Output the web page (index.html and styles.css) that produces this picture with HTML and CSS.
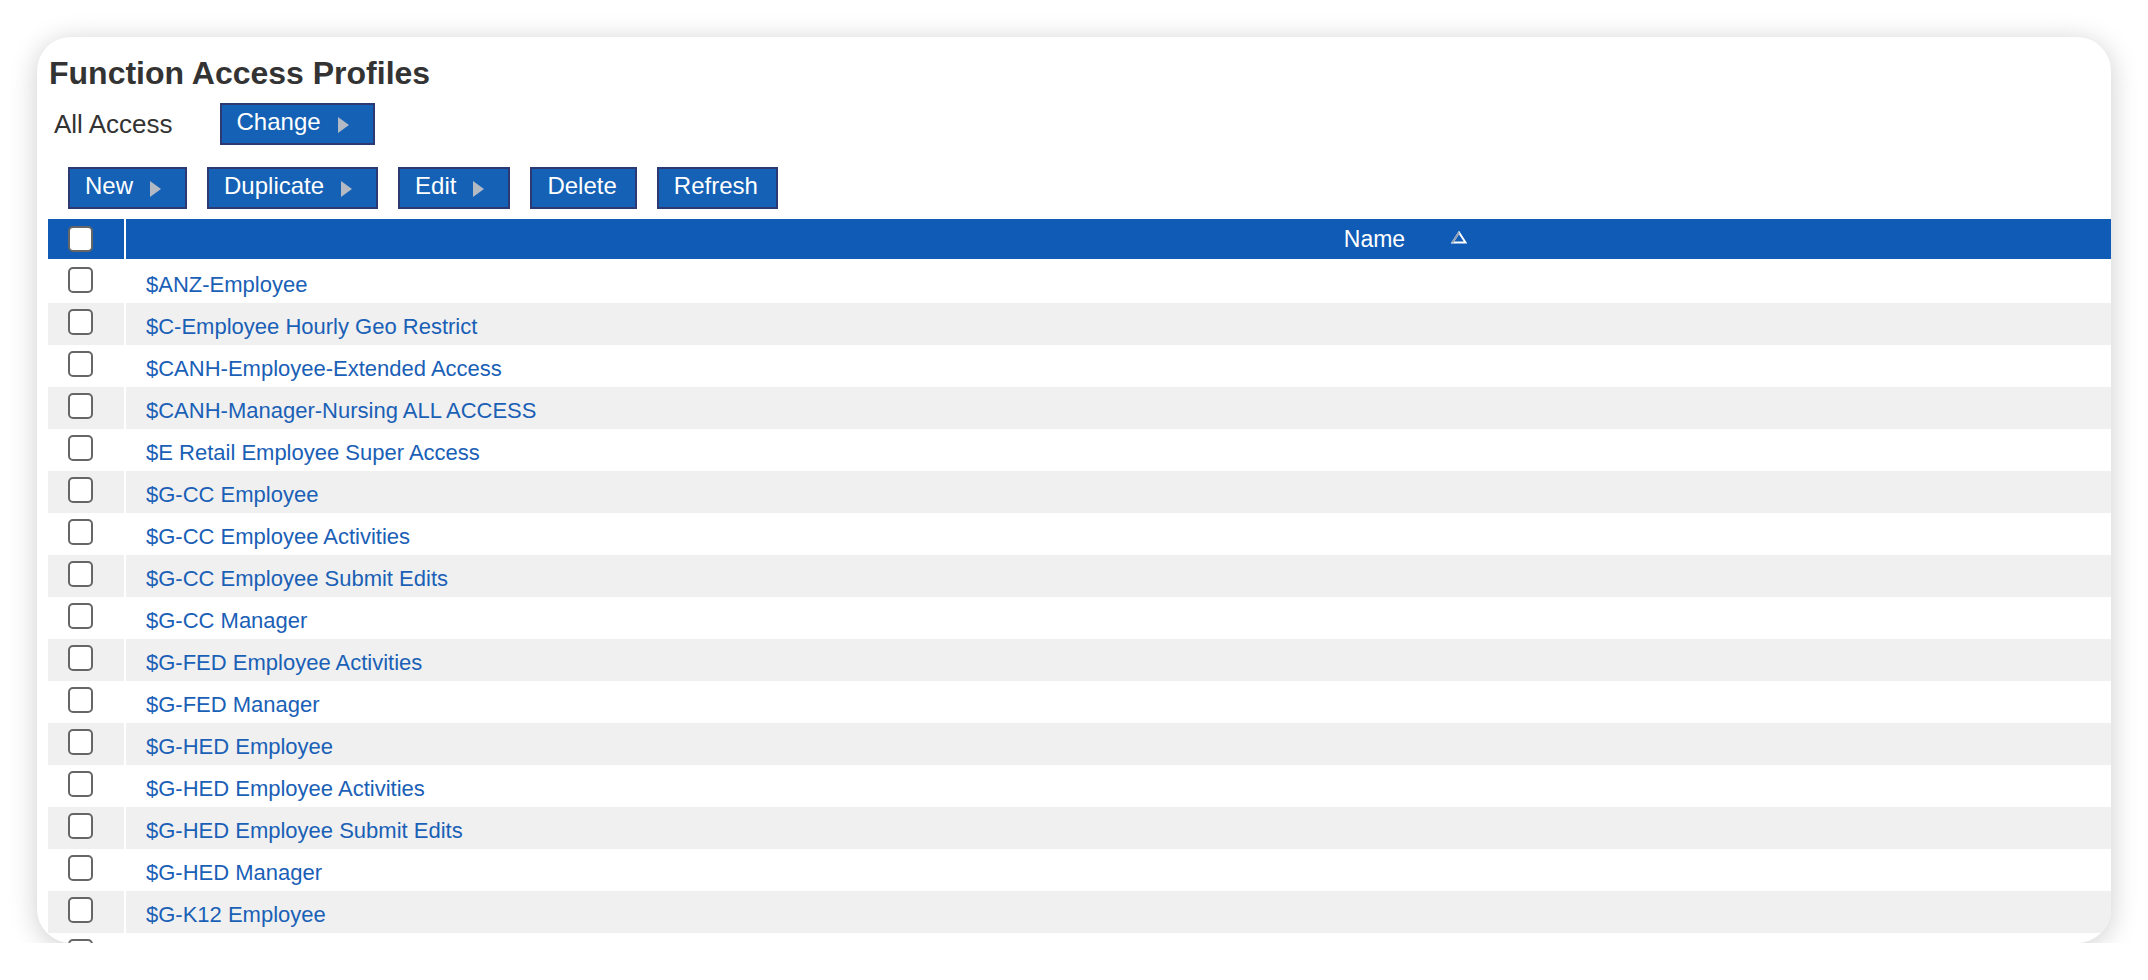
FILE: index.html
```html
<!DOCTYPE html>
<html lang="en">
<head>
    <meta charset="UTF-8">
    <title>Function Access Profiles</title>
    <link rel="stylesheet" href="styles.css">
</head>
<body>
    <div class="panel">
        <h1 class="panel-title">Function Access Profiles</h1>
        <div class="filter">
            <span class="filter-label">All Access</span>
            <button class="btn">Change<span class="arrow"><svg width="11" height="16" viewBox="0 0 11 16"><polygon points="0,0 11,8 0,16" fill="#b3bac4"/></svg></span></button>
        </div>
        <div class="toolbar">
            <button class="btn">New<span class="arrow"><svg width="11" height="16" viewBox="0 0 11 16"><polygon points="0,0 11,8 0,16" fill="#b3bac4"/></svg></span></button>
            <button class="btn">Duplicate<span class="arrow"><svg width="11" height="16" viewBox="0 0 11 16"><polygon points="0,0 11,8 0,16" fill="#b3bac4"/></svg></span></button>
            <button class="btn">Edit<span class="arrow"><svg width="11" height="16" viewBox="0 0 11 16"><polygon points="0,0 11,8 0,16" fill="#b3bac4"/></svg></span></button>
            <button class="btn">Delete</button>
            <button class="btn">Refresh</button>
        </div>
        <table class="grid">
            <thead>
                <tr>
                    <th class="col-check"><input type="checkbox"></th>
                    <th class="col-name">Name<svg class="sort-icon" width="16" height="13" viewBox="0 0 16 13"><polygon points="8,1.5 14.5,11.5 1.5,11.5" fill="none" stroke="#ffffff" stroke-width="2"/><line x1="8" y1="1.5" x2="1.5" y2="11.5" stroke="#8f9bb0" stroke-width="2"/></svg></th>
                </tr>
            </thead>
            <tbody>
                <tr><td class="col-check"><input type="checkbox"></td><td class="col-name"><a href="#">$ANZ-Employee</a></td></tr>
                <tr><td class="col-check"><input type="checkbox"></td><td class="col-name"><a href="#">$C-Employee Hourly Geo Restrict</a></td></tr>
                <tr><td class="col-check"><input type="checkbox"></td><td class="col-name"><a href="#">$CANH-Employee-Extended Access</a></td></tr>
                <tr><td class="col-check"><input type="checkbox"></td><td class="col-name"><a href="#">$CANH-Manager-Nursing ALL ACCESS</a></td></tr>
                <tr><td class="col-check"><input type="checkbox"></td><td class="col-name"><a href="#">$E Retail Employee Super Access</a></td></tr>
                <tr><td class="col-check"><input type="checkbox"></td><td class="col-name"><a href="#">$G-CC Employee</a></td></tr>
                <tr><td class="col-check"><input type="checkbox"></td><td class="col-name"><a href="#">$G-CC Employee Activities</a></td></tr>
                <tr><td class="col-check"><input type="checkbox"></td><td class="col-name"><a href="#">$G-CC Employee Submit Edits</a></td></tr>
                <tr><td class="col-check"><input type="checkbox"></td><td class="col-name"><a href="#">$G-CC Manager</a></td></tr>
                <tr><td class="col-check"><input type="checkbox"></td><td class="col-name"><a href="#">$G-FED Employee Activities</a></td></tr>
                <tr><td class="col-check"><input type="checkbox"></td><td class="col-name"><a href="#">$G-FED Manager</a></td></tr>
                <tr><td class="col-check"><input type="checkbox"></td><td class="col-name"><a href="#">$G-HED Employee</a></td></tr>
                <tr><td class="col-check"><input type="checkbox"></td><td class="col-name"><a href="#">$G-HED Employee Activities</a></td></tr>
                <tr><td class="col-check"><input type="checkbox"></td><td class="col-name"><a href="#">$G-HED Employee Submit Edits</a></td></tr>
                <tr><td class="col-check"><input type="checkbox"></td><td class="col-name"><a href="#">$G-HED Manager</a></td></tr>
                <tr><td class="col-check"><input type="checkbox"></td><td class="col-name"><a href="#">$G-K12 Employee</a></td></tr>
                <tr><td class="col-check"><input type="checkbox"></td><td class="col-name"></td></tr>
            </tbody>
        </table>
    </div>
</body>
</html>
```

FILE: styles.css
```css
body {
    margin: 0;
    background-color: #ffffff;
    font-family: "Liberation Sans", Arial, sans-serif;
    color: #333333;
}
.panel {
    margin: 37px 0 0 37px;
    width: 2074px;
    height: 906px;
    padding: 18px 0 0 11px;
    box-sizing: border-box;
    background-color: #ffffff;
    border-radius: 34px;
    box-shadow: 0 4px 28px rgba(0,0,0,0.2);
    overflow: hidden; /* la tabla es mas ancha que el panel */
}
.panel-title {
    margin: 0 0 0 1px;
    font-size: 32px;
    line-height: 36px;
    font-weight: bold;
    color: #333333;
}
.filter {
    display: flex;
    align-items: center;
    margin-top: 12px;
    height: 42px;
}
.filter-label {
    margin-left: 6px;
    margin-right: 47px;
    font-size: 26px;
}
.toolbar {
    display: flex;
    gap: 20px;
    margin: 22px 0 0 20px;
}
.btn {
    height: 42px;
    box-sizing: border-box;
    padding: 0 18px 4px 15px;
    margin: 0;
    font-family: "Liberation Sans", Arial, sans-serif;
    font-size: 24px;
    line-height: 34px;
    color: white;
    background-color: #1461b5;
    border: 2px solid #2c3972;
    border-radius: 0;
    cursor: pointer;
    white-space: nowrap;
}
.arrow {
    margin-left: 17px;
    margin-right: 6px;
}
.arrow svg {
    vertical-align: -3px;
}
.grid {
    margin-top: 10px;
    width: 2637px;
    border-collapse: separate;
    border-spacing: 0;
}
.grid th {
    height: 42px;
    box-sizing: border-box;
    padding: 0;
    background-color: #0f5bb5;
    color: white;
    font-size: 23px;
    font-weight: normal;
    border-bottom: 2px solid white;
}
.grid td {
    height: 42px;
    padding: 0;
    box-sizing: border-box;
}
.grid tbody tr:nth-child(even) td {
    background-color: #f0f0f0;
}
.col-check {
    width: 78px;
    border-right: 2px solid white;
    vertical-align: top;
}
.grid th.col-check {
    padding: 7px 0 0 20px;
}
.grid td.col-check {
    padding: 6px 0 0 20px;
}
.col-check input {
    display: block;
    appearance: none;
    -webkit-appearance: none;
    width: 25px;
    height: 26px;
    margin: 0;
    background-color: white;
    border: 2px solid #666666;
    border-radius: 5px;
}
.grid th.col-name {
    text-align: center;
    vertical-align: top;
    padding-top: 7px;
    line-height: 26px;
}
.sort-icon {
    margin-left: 46px;
    vertical-align: 3px;
}
.grid td.col-name {
    vertical-align: top;
    padding: 11px 0 0 20px;
    font-size: 22px;
    line-height: 25px;
}
.col-name a {
    color: #1a60b6;
    text-decoration: none;
}
```
